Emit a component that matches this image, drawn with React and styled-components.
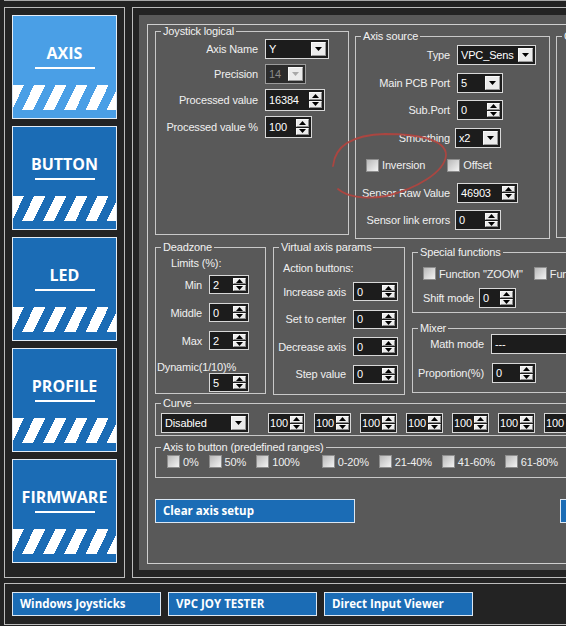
import React from 'react'
import styled, { createGlobalStyle } from 'styled-components'

const GlobalStyle = createGlobalStyle`
  * { box-sizing: border-box; }
  body { margin: 0; background: #232323; }
`

const Screen = styled.div`
  position: relative;
  width: 566px;
  height: 626px;
  overflow: hidden;
  background: #232323;
  font-family: "Liberation Sans", Arial, sans-serif;
  font-size: 11px;
  letter-spacing: -0.15px;
  color: #f0f0f0;
`

const TopEdge = styled.div`
  height: 1px;
  margin-left: 4px;
  background: #a9a9a9;
`

const Workspace = styled.div`
  display: flex;
  gap: 7px;
  margin: 6px 0 0 4px;
`

const Sidebar = styled.nav`
  flex: none;
  width: 121px;
  height: 571px;
  border: 1px solid #bcbcbc;
  padding: 7px;
  display: flex;
  flex-direction: column;
  gap: 7px;
`

const NavButton = styled.div`
  height: 104px;
  border: 1px solid #e4edf6;
  background: ${({ $active }) => ($active ? '#4a9fe6' : '#1b6cb5')};
  display: flex;
  flex-direction: column;
  align-items: center;
  padding-top: 27px;
`

const NavLabel = styled.span`
  font-family: "Open Sans", sans-serif;
  font-weight: 700;
  font-size: 16px;
  line-height: 20px;
  letter-spacing: 0;
  color: #fff;
`

const NavRule = styled.span`
  width: 60px;
  height: 2px;
  margin-top: 4px;
  background: #fff;
`

const Stripes = styled.span`
  align-self: stretch;
  height: 25px;
  margin-top: 16px;
  background: repeating-linear-gradient(116deg, #fff 0 10px, transparent 10px 19px);
`

const MainPanel = styled.section`
  flex: none;
  width: 640px;
  height: 571px;
  border: 1px solid #bcbcbc;
  padding: 7px 0 7px 6px;
`

const Surface = styled.div`
  height: 100%;
  background: #595959;
  padding: 9px 0 6px 8px;
`

const TabPage = styled.div`
  height: 100%;
  border: 1px solid #cfcfcf;
  border-right: none;
  padding-left: 7px;
  display: flex;
  flex-direction: column;
`

const Row = styled.div`
  display: flex;
  align-items: flex-start;
  gap: ${({ $gap }) => $gap ?? 6}px;
  margin-top: ${({ $mt }) => $mt ?? 0}px;
`

const Column = styled.div`
  flex: none;
  display: flex;
  flex-direction: column;
  gap: ${({ $gap }) => $gap ?? 0}px;
`

const GroupBox = styled.fieldset`
  flex: none;
  margin: ${({ $mt }) => $mt ?? 0}px 0 0;
  padding: 0;
  min-width: 0;
  width: ${({ $w }) => $w}px;
  height: ${({ $h }) => $h}px;
  border: 1px solid #c9c9c9;
`

const Legend = styled.legend`
  margin-left: 5px;
  padding: 0 2px;
  font-size: 11px;
  line-height: 12px;
  color: #f2f2f2;
  white-space: nowrap;
`

const Form = styled.div`
  display: grid;
  grid-template-columns: ${({ $cols }) => $cols};
  column-gap: 7px;
  row-gap: ${({ $rowGap }) => $rowGap}px;
  align-items: center;
  justify-items: start;
  padding: ${({ $pad }) => $pad};
  margin-top: ${({ $mt }) => $mt ?? 0}px;
`

const Label = styled.span`
  justify-self: end;
  white-space: nowrap;
`

const Caption = styled.div`
  line-height: 12px;
  white-space: nowrap;
  margin: ${({ $m }) => $m ?? 0};
`

const Field = styled.div`
  flex: none;
  display: flex;
  align-items: stretch;
  width: ${({ $w }) => $w}px;
  height: ${({ $h }) => $h ?? 20}px;
  border: 1px solid ${({ $disabled }) => ($disabled ? '#9c9c9c' : '#d8d8d8')};
  background: ${({ $disabled }) => ($disabled ? '#2c2c2c' : '#1c1c1c')};
  padding: ${({ $tight }) => ($tight ? '2px 1px 2px 1px' : '2px')};
  margin-left: ${({ $ml }) => $ml ?? 0}px;
`

const Value = styled.span`
  flex: 1;
  display: flex;
  align-items: center;
  padding-left: ${({ $tight }) => ($tight ? 0 : 1)}px;
  color: ${({ $disabled }) => ($disabled ? '#8a8a8a' : '#fff')};
  white-space: nowrap;
  overflow: hidden;
`

const ArrowButton = styled.span`
  width: 15px;
  display: flex;
  align-items: center;
  justify-content: center;
  background: #ebebeb;
  border: 1px solid;
  border-color: #fafafa #9a9a9a #9a9a9a #fafafa;
`

const SpinColumn = styled.span`
  flex: none;
  width: 13px;
  display: flex;
  flex-direction: column;
  gap: 1px;
`

const SpinButton = styled.span`
  flex: 1;
  display: flex;
  align-items: center;
  justify-content: center;
  background: #ebebeb;
  border: 1px solid;
  border-color: #fafafa #8a8a8a #8a8a8a #fafafa;
`

const Triangle = ({ up, color = '#000' }) => (
  <svg width="7" height="4" viewBox="0 0 7 4">
    <polygon points={up ? '0,4 7,4 3.5,0' : '0,0 7,0 3.5,4'} fill={color} />
  </svg>
)

const Dropdown = ({ w, h, value, disabled, ml }) => (
  <Field $w={w} $h={h} $disabled={disabled} $ml={ml}>
    <Value $disabled={disabled}>{value}</Value>
    <ArrowButton>
      <Triangle color={disabled ? '#a8a8a8' : '#000'} />
    </ArrowButton>
  </Field>
)

const Spinner = ({ w, h, value, ml, tight }) => (
  <Field $w={w} $h={h} $ml={ml} $tight={tight}>
    <Value $tight={tight}>{value}</Value>
    <SpinColumn>
      <SpinButton><Triangle up /></SpinButton>
      <SpinButton><Triangle /></SpinButton>
    </SpinColumn>
  </Field>
)

const CheckItem = styled.span`
  display: inline-flex;
  align-items: center;
  gap: 3px;
  white-space: nowrap;
  margin-left: ${({ $ml }) => $ml ?? 0}px;
`

const CheckBox = styled.span`
  flex: none;
  width: 13px;
  height: 13px;
  border: 1px solid #8e8e8e;
  background: linear-gradient(135deg, #b9b9b9, #f3f3f3);
`

const Check = ({ label, ml }) => (
  <CheckItem $ml={ml}>
    <CheckBox />
    {label}
  </CheckItem>
)

const CheckRow = styled.div`
  grid-column: 1 / -1;
  display: flex;
  align-items: center;
  min-height: 20px;
  gap: ${({ $gap }) => $gap}px;
  padding: ${({ $pad }) => $pad ?? 0};
`

const InlineRow = styled.div`
  display: flex;
  align-items: center;
  gap: ${({ $gap }) => $gap}px;
  padding: ${({ $pad }) => $pad ?? 0};
  margin-top: ${({ $mt }) => $mt ?? 0}px;
`

const BlueButton = styled.button`
  flex: none;
  width: ${({ $w }) => $w}px;
  height: 24px;
  padding: 0 0 1px 7px;
  border: 1px solid #dbe7f3;
  background: #1b6cb5;
  color: #fff;
  font-family: "Open Sans", sans-serif;
  font-weight: 700;
  font-size: 11.5px;
  text-align: left;
`

const BottomBar = styled.footer`
  display: flex;
  gap: 7px;
  width: 640px;
  height: 42px;
  margin: 5px 0 0 4px;
  border: 1px solid #bcbcbc;
  padding: 8px 7px;
`

const Annotation = styled.svg`
  position: absolute;
  left: 0;
  top: 0;
  pointer-events: none;
`

const navItems = ['AXIS', 'BUTTON', 'LED', 'PROFILE', 'FIRMWARE']
const curvePoints = Array.from({ length: 9 }, () => '100')
const ranges = ['0%', '50%', '100%', '0-20%', '21-40%', '41-60%', '61-80%', '81-100%']

export default function App() {
  return (
    <Screen>
      <GlobalStyle />
      <TopEdge />
      <Workspace>
        <Sidebar>
          {navItems.map((item, i) => (
            <NavButton key={item} $active={i === 0}>
              <NavLabel>{item}</NavLabel>
              <NavRule />
              <Stripes />
            </NavButton>
          ))}
        </Sidebar>

        <MainPanel>
          <Surface>
            <TabPage>
              <Row $gap={6}>
                <GroupBox $w={194} $h={210}>
                  <Legend>Joystick logical</Legend>
                  <Form $cols="96px auto" $rowGap={5} $pad="2px 0 0 6px">
                    <Label>Axis Name</Label>
                    <Dropdown w={64} value="Y" />
                    <Label>Precision</Label>
                    <Dropdown w={41} value="14" disabled />
                    <Label>Processed value</Label>
                    <Spinner w={60} h={22} value="16384" />
                    <Label>Processed value %</Label>
                    <Spinner w={47} h={22} value="100" />
                  </Form>
                </GroupBox>

                <GroupBox $w={195} $h={209} $mt={5}>
                  <Legend>Axis source</Legend>
                  <Form $cols="88px auto" $rowGap={7.5} $pad="3px 0 0 6px">
                    <Label>Type</Label>
                    <Dropdown w={79} value="VPC_Sens" />
                    <Label>Main PCB Port</Label>
                    <Dropdown w={46} value="5" />
                    <Label>Sub.Port</Label>
                    <Spinner w={46} value="0" />
                    <Label>Smoothing</Label>
                    <Dropdown w={46} value="x2" ml={-2} />
                    <CheckRow $gap={22} $pad="0 0 0 4px">
                      <Check label="Inversion" />
                      <Check label="Offset" />
                    </CheckRow>
                    <Label>Sensor Raw Value</Label>
                    <Spinner w={61} value="46903" />
                    <Label>Sensor link errors</Label>
                    <Spinner w={46} value="0" ml={-2} />
                  </Form>
                </GroupBox>

                <GroupBox $w={160} $h={208} $mt={5}>
                  <Legend>Calibration</Legend>
                </GroupBox>
              </Row>

              <Row $gap={7} $mt={2}>
                <GroupBox $w={111} $h={153}>
                  <Legend>Deadzone</Legend>
                  <Column>
                    <Caption $m="4px 0 0 15px">Limits (%):</Caption>
                    <Form $cols="45px auto" $rowGap={9} $pad="0 0 0 1px" $mt={6}>
                      <Label>Min</Label>
                      <Spinner w={40} h={19} value="2" />
                      <Label>Middle</Label>
                      <Spinner w={40} h={19} value="0" />
                      <Label>Max</Label>
                      <Spinner w={40} h={19} value="2" />
                    </Form>
                    <Caption $m="11px 0 0 1px">Dynamic(1/10)%</Caption>
                    <Spinner w={40} h={19} value="5" ml={53} />
                  </Column>
                </GroupBox>

                <GroupBox $w={132} $h={154}>
                  <Legend>Virtual axis params</Legend>
                  <Column>
                    <Caption $m="9px 0 0 9px">Action buttons:</Caption>
                    <Form $cols="70px auto" $rowGap={8.5} $pad="0 0 0 2px" $mt={8}>
                      <Label>Increase axis</Label>
                      <Spinner w={45} h={19} value="0" />
                      <Label>Set to center</Label>
                      <Spinner w={45} h={19} value="0" />
                      <Label>Decrease axis</Label>
                      <Spinner w={45} h={19} value="0" />
                      <Label>Step value</Label>
                      <Spinner w={45} h={19} value="0" />
                    </Form>
                  </Column>
                </GroupBox>

                <Column $gap={9}>
                  <GroupBox $w={220} $h={67} $mt={5}>
                    <Legend>Special functions</Legend>
                    <InlineRow $gap={11} $pad="0 0 0 10px" $mt={9}>
                      <Check label={'Function "ZOOM"'} />
                      <Check label={'Function "PAN"'} />
                    </InlineRow>
                    <InlineRow $gap={5} $pad="0 0 0 10px" $mt={8}>
                      <span>Shift mode</span>
                      <Spinner w={37} value="0" />
                    </InlineRow>
                  </GroupBox>

                  <GroupBox $w={220} $h={71}>
                    <Legend>Mixer</Legend>
                    <Form $cols="70px auto auto" $rowGap={9} $pad="0 0 0 1px">
                      <Label>Math mode</Label>
                      <Dropdown w={140} value="---" />
                      <span />
                      <Label>Proportion(%)</Label>
                      <Spinner w={44} value="0" ml={1} />
                      <Caption $m="0 0 0 9px">Result</Caption>
                    </Form>
                  </GroupBox>
                </Column>
              </Row>

              <Row $mt={2}>
                <GroupBox $w={640} $h={39}>
                  <Legend>Curve</Legend>
                  <InlineRow $gap={9} $pad="0 0 0 5px" $mt={4}>
                    <Dropdown w={88} value="Disabled" />
                    {curvePoints.map((v, i) => (
                      <Spinner key={i} w={37} value={v} tight ml={i === 0 ? 10 : 0} />
                    ))}
                  </InlineRow>
                </GroupBox>
              </Row>

              <Row $mt={5}>
                <GroupBox $w={640} $h={37}>
                  <Legend>Axis to button (predefined ranges)</Legend>
                  <InlineRow $gap={10} $pad="0 0 0 11px" $mt={2}>
                    {ranges.map((r, i) => (
                      <Check key={r} label={r} ml={i === 3 ? 12 : 0} />
                    ))}
                  </InlineRow>
                </GroupBox>
              </Row>

              <Row $mt={21} $gap={205}>
                <BlueButton $w={200}>Clear axis setup</BlueButton>
                <BlueButton $w={200}>Save axis setup</BlueButton>
              </Row>
            </TabPage>
          </Surface>
        </MainPanel>
      </Workspace>

      <BottomBar>
        <BlueButton $w={149}>Windows Joysticks</BlueButton>
        <BlueButton $w={149}>VPC JOY TESTER</BlueButton>
        <BlueButton $w={149}>Direct Input Viewer</BlueButton>
      </BottomBar>

      <Annotation width="566" height="626" viewBox="0 0 566 626">
        <path
          d="M333 166 C335 146 352 135 385 134 C420 134 446 140 446 155 C445 172 416 189 386 196 C363 200 346 196 338 189"
          fill="none"
          stroke="#b2443e"
          strokeWidth="1.8"
          strokeLinecap="round"
          opacity="0.9"
        />
      </Annotation>
    </Screen>
  )
}
